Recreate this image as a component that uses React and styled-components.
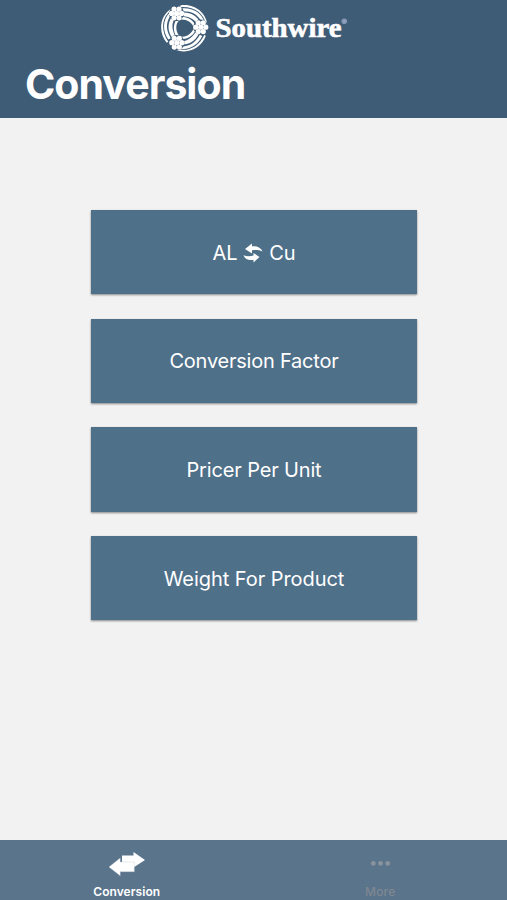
import styled, { createGlobalStyle } from "styled-components";

const GlobalStyle = createGlobalStyle`
  * {
    box-sizing: border-box;
  }

  body {
    margin: 0;
    background-color: #f2f2f2;
    font-family: Inter, "Liberation Sans", sans-serif;
  }
`;

const Screen = styled.div`
  display: flex;
  flex-direction: column;
  height: 100vh;
  overflow: hidden;
`;

const Header = styled.header`
  display: flex;
  flex-direction: column;
  height: 118px;
  flex-shrink: 0;
  background-color: #3f5c76;
`;

const Brand = styled.div`
  display: flex;
  justify-content: center;
  height: 56px;
`;

const Title = styled.h1`
  margin: 0;
  padding-left: 25px;
  color: white;
  font-size: 41px;
  font-weight: 700;
  line-height: 56px;
  letter-spacing: -0.98px;
`;

const Menu = styled.main`
  display: flex;
  flex-direction: column;
  flex: 1;
  gap: 24.5px;
  padding: 92px 90px 0 91px;
`;

const MenuButton = styled.button`
  display: flex;
  align-items: center;
  justify-content: center;
  gap: 6px;
  height: 84.2px;
  padding: 1px 0 0;
  border: 0;
  background-color: #4f7089;
  box-shadow: 0 1px 2px rgba(0, 0, 0, 0.45);
  color: white;
  font-family: inherit;
  font-size: 20px;
  letter-spacing: ${(props) => props.$spacing || "0"};
`;

const TabBar = styled.nav`
  display: flex;
  height: 60px;
  flex-shrink: 0;
  background-color: #5a748c;
`;

const Tab = styled.a`
  display: flex;
  flex: 1;
  flex-direction: column;
  align-items: center;
  padding-top: 9px;
  color: ${(props) => (props.$active ? "white" : "#7f8790")};
  font-size: 12px;
  font-weight: ${(props) => (props.$active ? 600 : 500)};
  line-height: 16px;
  letter-spacing: ${(props) => (props.$active ? "0.05px" : "0.2px")};
`;

const TabIcon = styled.svg`
  width: 38px;
  height: 30px;
  margin-bottom: 5px;
`;

const strands = [
  [0, 0],
  [5, 0],
  [2.5, 4.4],
  [-2.5, 4.4],
  [-5, 0],
  [-2.5, -4.4],
  [2.5, -4.4],
];

const Logo = () => (
  <svg width="190" height="56" viewBox="159 0 190 56">
    <g transform="translate(184.3 28)">
      {[0, 120, 240].map((angle) => (
        <g key={angle} transform={`rotate(${angle})`} fill="white">
          <path d="M-4 -22.6 C10 -25 23 -15 23.3 -1 L21.8 -3 C20 -15 9 -22 -4 -20.8 Z" />
          <path d="M-2 -19.6 C8 -20.5 18 -15 20.5 -5 L17 -7 C13 -14 7 -17 -2 -16.8 Z" />
          <path d="M-2 -15.4 C6 -16 13 -12 16 -5 L12.5 -4.5 C9.5 -9.5 4 -12 -5 -12 Z" />
          <path d="M-6 -11 C1 -11.7 7 -9.5 10.5 -4 L9 -1.5 C7 -6.5 1 -9.7 -7 -8 Z" />
        </g>
      ))}
      {[-118, -3, 117].map((angle) => (
        <g
          key={angle}
          transform={`rotate(${angle}) translate(16.5 0) rotate(${-angle})`}
        >
          <circle r="7.6" fill="#3f5c76" />
          {strands.map(([x, y]) => (
            <circle key={`${x},${y}`} cx={x} cy={y} r="2.6" fill="white" />
          ))}
        </g>
      ))}
    </g>
    <text
      x="215.5"
      y="36.7"
      fill="white"
      stroke="white"
      strokeWidth="0.6"
      fontFamily='"Liberation Serif", serif'
      fontSize="27"
      fontWeight="700"
      textLength="126"
      lengthAdjust="spacingAndGlyphs"
    >
      Southwire
    </text>
    <circle cx="344.3" cy="21.2" r="2.8" fill="#8496b3" />
    <circle cx="344.3" cy="21.2" r="1" fill="#9dabc0" />
  </svg>
);

const SwapIcon = () => (
  <svg width="20" height="20" viewBox="0 0 20 20" fill="white">
    <path d="M2 6 L9 0.5 V3.4 C14 2.8 18 4.6 19.5 8.6 C16 6.7 12.5 6.8 9 7.3 V10.5 Z" />
    <path d="M16.5 14 L10.5 19.5 V16.8 C6 17.6 2 16.5 0.5 12.2 C4 13.6 7 13.3 10.5 12.6 V10 Z" />
  </svg>
);

const ArrowsIcon = () => (
  <TabIcon viewBox="0 0 38 30" fill="white">
    <path d="M14 6.5 H25.5 V3 L37 11 L25.5 18.5 V15.5 H14 Z" />
    <path
      d="M26.3 13 H12.2 V9 L1 18 L12.2 26.8 V22.7 H26.3 Z"
      stroke="#bac6d1"
      strokeWidth="0.4"
    />
  </TabIcon>
);

const DotsIcon = () => (
  <TabIcon viewBox="0 0 38 30" fill="#89939d">
    <circle cx="12.3" cy="14.4" r="2.4" />
    <circle cx="19.5" cy="14.4" r="2.4" />
    <circle cx="26.7" cy="14.4" r="2.4" />
  </TabIcon>
);

function App() {
  return (
    <Screen>
      <GlobalStyle />
      <Header>
        <Brand>
          <Logo />
        </Brand>
        <Title>Conversion</Title>
      </Header>
      <Menu>
        <MenuButton $spacing="-0.2px">
          <span>AL</span>
          <SwapIcon />
          <span>Cu</span>
        </MenuButton>
        <MenuButton $spacing="-0.22px">Conversion Factor</MenuButton>
        <MenuButton $spacing="-0.15px">Pricer Per Unit</MenuButton>
        <MenuButton $spacing="-0.05px">Weight For Product</MenuButton>
      </Menu>
      <TabBar>
        <Tab $active>
          <ArrowsIcon />
          Conversion
        </Tab>
        <Tab>
          <DotsIcon />
          More
        </Tab>
      </TabBar>
    </Screen>
  );
}

export default App;
